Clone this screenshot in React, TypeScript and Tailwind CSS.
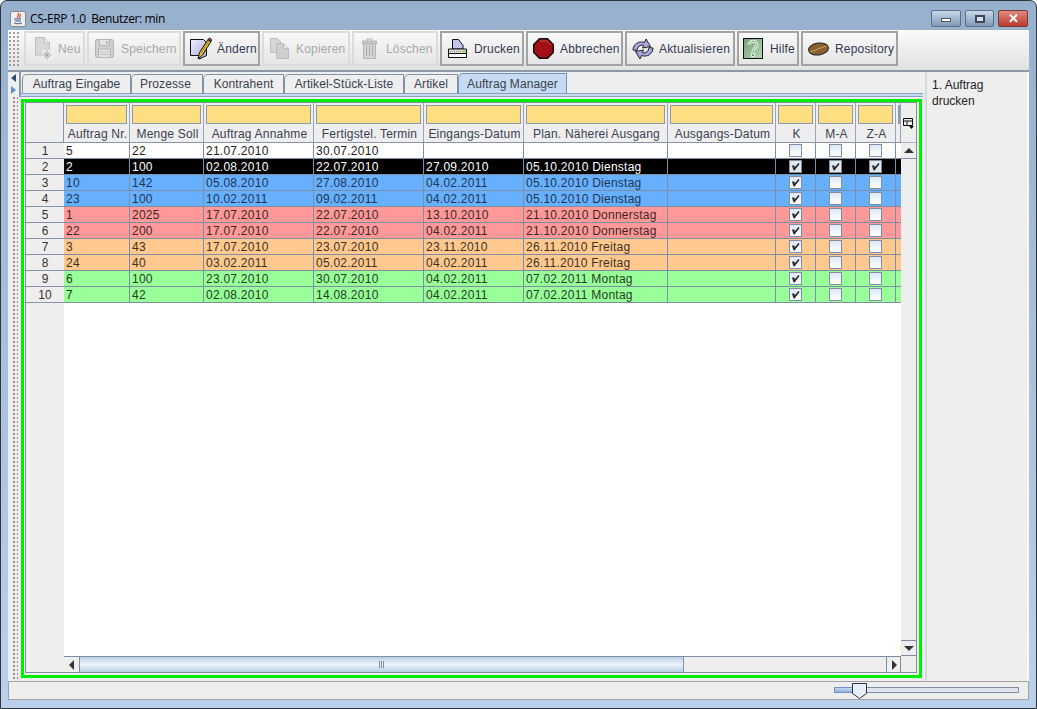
import React from 'react'

const font = 'font-["Liberation_Sans",Arial,sans-serif]'

const widths = ['w-[66px]', 'w-[74px]', 'w-[110px]', 'w-[110px]', 'w-[100px]', 'w-[144px]', 'w-[108px]', 'w-[40px]', 'w-[40px]', 'w-[40px]', 'w-[5px]']

const heads = ['Auftrag Nr.', 'Menge Soll', 'Auftrag Annahme', 'Fertigstel. Termin', 'Eingangs-Datum', 'Plan. Näherei Ausgang', 'Ausgangs-Datum', 'K', 'M-A', 'Z-A', '']

const rows = [
  { bg: 'bg-white', fg: 'text-[#222]', k: false, m: false, z: false, cells: ['5', '22', '21.07.2010', '30.07.2010', '', '', ''] },
  { bg: 'bg-black', fg: 'text-white', k: true, m: true, z: true, cells: ['2', '100', '02.08.2010', '22.07.2010', '27.09.2010', '05.10.2010 Dienstag', ''] },
  { bg: 'bg-[#66b0ff]', fg: 'text-[#1f3550]', k: true, m: false, z: false, cells: ['10', '142', '05.08.2010', '27.08.2010', '04.02.2011', '05.10.2010 Dienstag', ''] },
  { bg: 'bg-[#66b0ff]', fg: 'text-[#1f3550]', k: true, m: false, z: false, cells: ['23', '100', '10.02.2011', '09.02.2011', '04.02.2011', '05.10.2010 Dienstag', ''] },
  { bg: 'bg-[#ff9999]', fg: 'text-[#402828]', k: true, m: false, z: false, cells: ['1', '2025', '17.07.2010', '22.07.2010', '13.10.2010', '21.10.2010 Donnerstag', ''] },
  { bg: 'bg-[#ff9999]', fg: 'text-[#402828]', k: true, m: false, z: false, cells: ['22', '200', '17.07.2010', '22.07.2010', '04.02.2011', '21.10.2010 Donnerstag', ''] },
  { bg: 'bg-[#ffc88f]', fg: 'text-[#40321f]', k: true, m: false, z: false, cells: ['3', '43', '17.07.2010', '23.07.2010', '23.11.2010', '26.11.2010 Freitag', ''] },
  { bg: 'bg-[#ffc88f]', fg: 'text-[#40321f]', k: true, m: false, z: false, cells: ['24', '40', '03.02.2011', '05.02.2011', '04.02.2011', '26.11.2010 Freitag', ''] },
  { bg: 'bg-[#99ff99]', fg: 'text-[#1f401f]', k: true, m: false, z: false, cells: ['6', '100', '23.07.2010', '30.07.2010', '04.02.2011', '07.02.2011 Montag', ''] },
  { bg: 'bg-[#99ff99]', fg: 'text-[#1f401f]', k: true, m: false, z: false, cells: ['7', '42', '02.08.2010', '14.08.2010', '04.02.2011', '07.02.2011 Montag', ''] },
]

const tabs = [
  { name: 'Auftrag Eingabe', w: 'w-[109px]' },
  { name: 'Prozesse', w: 'w-[72px] pr-[3px]' },
  { name: 'Kontrahent', w: 'w-[81px]' },
  { name: 'Artikel-Stück-Liste', w: 'w-[120px]' },
  { name: 'Artikel', w: 'w-[54px]' },
]

function NewIcon() {
  return (
    <svg width="18" height="23" viewBox="0 0 18 23">
      <path d="M.5.500h9l5 5.500v12H.5z" fill="#d8d8d8" stroke="#bdbdbd" />
      <path d="M9.500.5v5.500h5" fill="#ececec" stroke="#bdbdbd" />
      <path d="M7 13h11v10H7z" fill="#eeeeee" />
      <path d="M12 13.500v9M7.500 18h9M9 15l6 6M15 15l-6 6" stroke="#a6a6a6" />
    </svg>
  )
}

function SaveIcon() {
  return (
    <svg width="19" height="19" viewBox="0 0 19 19">
      <rect x=".5" y=".5" width="18" height="18" rx="2" fill="#cfcfcf" stroke="#b0b0b0" />
      <path d="M4.500.5h10v6h-10z" fill="#e4e4e4" stroke="#b5b5b5" />
      <path d="M11 2h2v3h-2z" fill="#b5b5b5" />
      <path d="M3.500 10h12v8.500h-12z" fill="#e2e2e2" stroke="#b5b5b5" />
      <path d="M5 13h9M5 15.500h9" stroke="#c2c2c2" />
    </svg>
  )
}

function EditIcon() {
  return (
    <svg width="22" height="24" viewBox="0 0 22 24">
      <defs>
        <linearGradient id="editPage" x1="0" y1="0" x2="1" y2="1">
          <stop offset="0" stopColor="#f0f0fa" />
          <stop offset="1" stopColor="#a8a8dc" />
        </linearGradient>
      </defs>
      <path d="M.5 2.500h13l3 3v13l-7 3.500-.5-3.500H.5z" fill="url(#editPage)" stroke="#111" />
      <path d="M8 22l1.500-6.500L18 2.500l3 2L12.500 18z" fill="#e6c238" stroke="#111" />
      <path d="M11 16L19 4" stroke="#a07a18" />
      <path d="M18 2.500l1.500-1.500 2 1.500-.5 2z" fill="#c04a4a" stroke="#111" />
    </svg>
  )
}

function CopyIcon() {
  return (
    <svg width="19" height="21" viewBox="0 0 19 21">
      <path d="M.5.500h7l3 3v11H.5z" fill="#d6d6d6" stroke="#bcbcbc" />
      <path d="M6.500 5.500h7l5 5v10h-12z" fill="#cfcfcf" stroke="#bcbcbc" />
      <path d="M13.500 5.500v5h5" fill="#e6e6e6" stroke="#bcbcbc" />
    </svg>
  )
}

function TrashIcon() {
  return (
    <svg width="15" height="21" viewBox="0 0 15 21">
      <path d="M.5 3h14v3H.5z" fill="#c9c9c9" stroke="#b5b5b5" />
      <path d="M5 3V1h5v2" fill="none" stroke="#b5b5b5" />
      <path d="M1.500 6h12v14.500h-12z" fill="#d4d4d4" stroke="#b5b5b5" />
      <path d="M4.500 8v10M7.500 8v10M10.500 8v10" stroke="#adadad" />
    </svg>
  )
}

function PrintIcon() {
  return (
    <svg width="19" height="19" viewBox="0 0 19 19">
      <path d="M4.500.5h6l4.500 6v3.500H4.500z" fill="#c5c5ee" stroke="#111" />
      <path d="M.5 10h18v4.500H.5z" fill="#dedede" stroke="#111" />
      <path d="M.5 14.500h18v4H.5z" fill="#fafafa" stroke="#111" />
      <path d="M2 12.500h11" stroke="#888" strokeDasharray="1 1" />
      <path d="M14.500 11.500h3v2h-3z" fill="#7fe020" />
    </svg>
  )
}

function StopIcon() {
  return (
    <svg width="21" height="21" viewBox="0 0 21 21">
      <path d="M6.500 .75h8l5.750 5.750v8l-5.750 5.750h-8L.75 14.500v-8z" fill="#a30f16" stroke="#111" strokeWidth="1.500" />
      <path d="M7 3h7l4 4" fill="none" stroke="#cc4a4a" />
    </svg>
  )
}

function RefreshIcon() {
  return (
    <svg width="22" height="22" viewBox="0 0 22 22">
      <path d="M1 12C1 6 7 2.500 12.500 4.500L14 1l4.500 7.500-8 1.500 1.200-2.700C8 6.500 5.500 8.500 5 12.500z" fill="#a6a6e2" stroke="#222" />
      <path d="M21 10c0 6-6 9.500-11.500 7.500L8 21l-4.500-7.500 8-1.500-1.200 2.700c3.700.8 6.200-1.200 6.700-5.200z" fill="#a6a6e2" stroke="#222" />
    </svg>
  )
}

function HelpIcon() {
  return (
    <svg width="20" height="21" viewBox="0 0 20 21">
      <defs>
        <linearGradient id="helpBox" x1="0" y1="0" x2="1" y2="1">
          <stop offset="0" stopColor="#6f9f73" />
          <stop offset="1" stopColor="#b8d8b8" />
        </linearGradient>
      </defs>
      <rect x=".5" y=".5" width="19" height="20" fill="url(#helpBox)" stroke="#111" />
      <path d="M6 7c0-5 8-5 8 0 0 3-4 3-4 7" fill="none" stroke="#e6f4e6" strokeWidth="3" />
      <path d="M6 7c0-5 8-5 8 0 0 3-4 3-4 7" fill="none" stroke="#76a67a" strokeWidth="1" />
      <rect x="8.500" y="15.500" width="3" height="3" fill="#76a67a" stroke="#e6f4e6" />
    </svg>
  )
}

function BeanIcon() {
  return (
    <svg width="21" height="14" viewBox="0 0 21 14">
      <ellipse cx="10.500" cy="7" rx="10" ry="6" transform="rotate(-8 10.500 7)" fill="#8a6030" stroke="#222" />
      <path d="M2 10c5-1 11-5 17-6" fill="none" stroke="#c9a36a" />
    </svg>
  )
}

function JavaIcon() {
  return (
    <div className="flex h-[16px] w-[16px] items-center justify-center rounded-[2px] border border-[#8a8a8a] bg-[#eeeeee]">
      <svg width="12" height="13" viewBox="0 0 12 13">
        <path d="M6 1c2 2-2 3 0 5M8 2c1 2-1 2 0 4" fill="none" stroke="#d0402a" strokeWidth="1.200" />
        <path d="M2 7h7M3 9h6M2 11c2 1 6 1 8 0" fill="none" stroke="#3a5f8f" />
      </svg>
    </div>
  )
}

function ToolButton({ icon, label, w, off }: { icon: React.ReactNode; label: string; w: string; off?: boolean }) {
  return (
    <div className={`flex h-[35px] items-center border-2 tracking-[0.18px] ${w} ${off ? 'border-[#dcdcdc] text-[#a8a8a8]' : 'border-[#a3a3a3] text-[#333b52]'}`}>
      <span className="flex shrink-0 items-center justify-center">{icon}</span>
      <span>{label}</span>
    </div>
  )
}

function Check({ on, dark }: { on: boolean; dark?: boolean }) {
  return (
    <div className={`flex h-[13px] w-[13px] items-center justify-center border border-[#7f8fa3] ${on && dark ? 'bg-[#dfe6ee]' : 'bg-gradient-to-b from-[#dde7f3] to-white'}`}>
      {on && (
        <svg width="9" height="9" viewBox="0 0 9 9">
          <path d="M1 3.500h2.500v2L7.500 1 8.500 2 3.500 8.500H2.500z" fill="#222" />
        </svg>
      )}
    </div>
  )
}

function Arrow({ dir }: { dir: 'up' | 'down' | 'left' | 'right' }) {
  const d = { up: 'M0 7L5 2l5 5z', down: 'M0 3l5 5 5-5z', left: 'M7 0v10L2 5z', right: 'M3 0v10l5-5z' }[dir]
  return (
    <svg width="10" height="10" viewBox="0 0 10 10">
      <path d={d} fill="#333" />
    </svg>
  )
}

export default function App() {
  return (
    <div className={`${font} flex h-[709px] w-[1037px] flex-col overflow-hidden rounded-t-[7px] border border-[#30363d] bg-gradient-to-b from-[#97b0cd] to-[#b9d1ea] text-[12px] text-[#333]`}>
      {/* Title bar */}
      <div className="flex h-[29px] shrink-0 items-center pl-[9px] pr-[8px] pt-[6px]">
        <JavaIcon />
        <span className={`ml-[4px] whitespace-pre font-["Open_Sans",sans-serif] text-[12px] tracking-[-0.36px] text-black`}>CS-ERP 1.0  Benutzer: min</span>
        <div className="ml-auto flex gap-[4px]">
          <div className="flex h-[17px] w-[30px] items-center justify-center rounded-[2px] border border-[#5b6f87] bg-gradient-to-b from-[#c9d8e9] to-[#7f9ab9]">
            <div className="mt-[3px] h-[4px] w-[10px] border border-[#556] bg-white" />
          </div>
          <div className="flex h-[17px] w-[29px] items-center justify-center rounded-[2px] border border-[#5b6f87] bg-gradient-to-b from-[#c9d8e9] to-[#7f9ab9]">
            <div className="h-[8px] w-[10px] border-2 border-[#445] bg-[#cfe0f0]" />
          </div>
          <div className="flex h-[17px] w-[30px] items-center justify-center rounded-[2px] border border-[#7a3b33] bg-gradient-to-b from-[#e0897c] to-[#b8392b]">
            <span className="text-[13px] font-bold leading-none text-white">✕</span>
          </div>
        </div>
      </div>

      {/* Window body */}
      <div className="mx-[7px] flex min-h-0 flex-1 flex-col bg-[#eeeeee]">
        {/* Toolbar */}
        <div className="flex h-[40px] shrink-0 items-start gap-[2px] bg-gradient-to-b from-[#fafafa] to-[#e2e2e2] pt-[1px]">
          <div className="mr-[2px] h-[35px] w-[12px] bg-[radial-gradient(#9a9a9a_0.7px,transparent_0.8px)] bg-[length:4px_4px]" />
          <ToolButton off w="w-[61px] pl-[9px] gap-[5px]" label="Neu" icon={<NewIcon />} />
          <ToolButton off w="w-[94px] pl-[6px] gap-[7px]" label="Speichern" icon={<SaveIcon />} />
          <ToolButton w="w-[77px] pl-[5px] gap-[5px]" label="Ändern" icon={<EditIcon />} />
          <ToolButton off w="w-[88px] pl-[6px] gap-[7px]" label="Kopieren" icon={<CopyIcon />} />
          <ToolButton off w="w-[86px] pl-[8px] gap-[9px]" label="Löschen" icon={<TrashIcon />} />
          <ToolButton w="w-[84px] pl-[6px] gap-[7px]" label="Drucken" icon={<PrintIcon />} />
          <ToolButton w="w-[97px] pl-[5px] gap-[6px]" label="Abbrechen" icon={<StopIcon />} />
          <ToolButton w="w-[110px] pl-[5px] gap-[5px]" label="Aktualisieren" icon={<RefreshIcon />} />
          <ToolButton w="w-[62px] pl-[4px] gap-[7px]" label="Hilfe" icon={<HelpIcon />} />
          <ToolButton w="w-[97px] pl-[5px] gap-[6px]" label="Repository" icon={<BeanIcon />} />
        </div>

        {/* Main split */}
        <div className="flex min-h-0 flex-1 border-t-2 border-[#8c99a8]">
          {/* Collapse strip */}
          <div className="flex w-[11px] shrink-0 flex-col">
            <div className="flex h-[24px] shrink-0 flex-col items-center justify-center gap-[4px]">
              <div className="h-0 w-0 border-y-[4px] border-r-[5px] border-y-transparent border-r-[#334a70]" />
              <div className="h-0 w-0 border-y-[4px] border-l-[5px] border-y-transparent border-l-[#5b8fd0]" />
            </div>
            <div className="ml-[4px] w-[6px] flex-1 bg-[radial-gradient(#8a8a8a_0.7px,transparent_0.8px)] bg-[length:4px_4px]" />
          </div>

          {/* Tabbed pane */}
          <div className="flex w-[904px] shrink-0 flex-col">
            <div className="flex h-[25px] shrink-0 flex-col border-l-2 border-[#8c99a8]">
              <div className="flex h-[21px] shrink-0 items-end pl-[1px] pt-[2px] tracking-[0.1px]">
                {tabs.map((t) => (
                  <div key={t.name} className={`flex h-[19px] items-center justify-center rounded-tl-[5px] border border-b-0 border-[#8092a8] text-[#3a4252] ${t.w}`}>
                    {t.name}
                  </div>
                ))}
                <div className="flex h-[20px] w-[109px] items-center justify-center rounded-tl-[5px] border border-b-0 border-[#6f93c2] bg-[#c6daf1] text-[#3a4252]">
                  Auftrag Manager
                </div>
              </div>
              <div className="h-[4px] shrink-0 border-y border-[#8ba0bb] bg-[#c6daf1]" />
            </div>

            {/* Green frame */}
            <div className="ml-[2px] mt-[2px] flex h-[579px] w-[901px] flex-col border-[3px] border-[#00ee00] bg-[#eeeeee] pb-[2px] pl-[1px] pr-[2px]">
              <div className="flex min-h-0 flex-1 border border-[#7f8fa3]">
                {/* Row header */}
                <div className="flex w-[38px] shrink-0 flex-col">
                  <div className="h-[40px] shrink-0 border-b border-r border-[#8795a6]" />
                  {rows.map((r, i) => (
                    <div key={i} className="flex h-[16px] shrink-0 items-center justify-center border-b border-[#8795a6] text-[#333]">
                      {i + 1}
                    </div>
                  ))}
                </div>

                {/* Grid */}
                <div className="flex w-[837px] shrink-0 flex-col bg-white">
                  <div className="flex h-[40px] shrink-0 border-b border-[#8795a6] bg-[#eeeeee]">
                    {heads.map((h, i) => (
                      <div key={i} className={`flex shrink-0 flex-col overflow-hidden border-r border-[#9aa6b5] px-[2px] pt-[2px] ${widths[i]}`}>
                        <div className="h-[19px] shrink-0 border border-[#8a9bb0] bg-[#fddf81]" />
                        <div className="flex flex-1 items-center justify-center whitespace-nowrap pl-[2px] pt-[1px] tracking-[0.2px] text-[#3a4252]">{h}</div>
                      </div>
                    ))}
                  </div>
                  {rows.map((r, i) => (
                    <div key={i} className={`flex h-[16px] shrink-0 border-b border-[#7f8fa3] tracking-[0.25px] ${r.bg} ${r.fg}`}>
                      {r.cells.map((c, j) => (
                        <div key={j} className={`flex shrink-0 items-center overflow-hidden whitespace-nowrap border-r border-[#7f8fa3] pl-[2px] ${widths[j]}`}>
                          {c}
                        </div>
                      ))}
                      {[r.k, r.m, r.z].map((on, j) => (
                        <div key={j} className="flex w-[40px] shrink-0 items-center justify-center border-r border-[#7f8fa3]">
                          <Check on={on} dark={r.bg === 'bg-black'} />
                        </div>
                      ))}
                    </div>
                  ))}
                  <div className="flex-1" />
                  {/* Horizontal scrollbar */}
                  <div className="flex h-[16px] shrink-0 border-t border-[#7f8fa3] bg-[#eeeeee]">
                    <div className="flex w-[16px] items-center justify-center border-r border-[#7f8fa3]">
                      <Arrow dir="left" />
                    </div>
                    <div className="flex w-[604px] items-center justify-center gap-[1px] border-r border-[#7f94b5] bg-gradient-to-b from-[#b9cde6] via-[#eef4fb] to-[#b9cde6]">
                      <div className="h-[7px] w-[1px] bg-[#7f8fa3]" />
                      <div className="h-[7px] w-[1px] bg-[#7f8fa3]" />
                      <div className="h-[7px] w-[1px] bg-[#7f8fa3]" />
                    </div>
                    <div className="flex-1" />
                    <div className="flex w-[15px] items-center justify-center border-x border-[#7f8fa3]">
                      <Arrow dir="right" />
                    </div>
                  </div>
                </div>

                {/* Vertical scrollbar */}
                <div className="flex flex-1 flex-col">
                  <div className="flex h-[40px] shrink-0 items-center justify-center border-b border-[#aab4c0] pt-[1px]">
                    <svg width="11" height="11" viewBox="0 0 11 11">
                      <path d="M.5.500h9v7h-9zM.5 3h9M4 3v5" fill="none" stroke="#111" />
                      <path d="M6 8h5l-2.500 3z" fill="#111" />
                    </svg>
                  </div>
                  <div className="flex h-[16px] shrink-0 items-center justify-center border-b border-[#7f8fa3]">
                    <Arrow dir="up" />
                  </div>
                  <div className="flex-1" />
                  <div className="flex h-[16px] shrink-0 items-center justify-center border-y border-[#7f8fa3]">
                    <Arrow dir="down" />
                  </div>
                  <div className="h-[16px] shrink-0" />
                </div>
              </div>
            </div>
          </div>

          {/* Side note */}
          <div className="ml-[2px] flex-1 border-l-2 border-r-2 border-l-[#d5dae0] border-r-[#fafafa] pl-[5px] pt-[5px] leading-[16px] text-[#222]">
            1. Auftrag
            <br />
            drucken
          </div>
        </div>

        {/* Status bar */}
        <div className="relative h-[19px] shrink-0 border border-[#a3a3a3] bg-[#eeeeee]">
          <div className="absolute left-[825px] top-[5px] h-[6px] w-[185px] border border-[#7f8fa3] bg-[#dfe5ec]" />
          <div className="absolute left-[825px] top-[5px] h-[6px] w-[20px] border border-[#6f93c2] bg-gradient-to-b from-[#c6daf1] to-[#8fb0d8]" />
          <svg className="absolute left-[843px] top-[1px]" width="15" height="16" viewBox="0 0 15 16">
            <path d="M.5.500h14v10l-7 5-7-5z" fill="#e6eef7" stroke="#334" />
          </svg>
        </div>
      </div>
      <div className="h-[8px] shrink-0" />
    </div>
  )
}
